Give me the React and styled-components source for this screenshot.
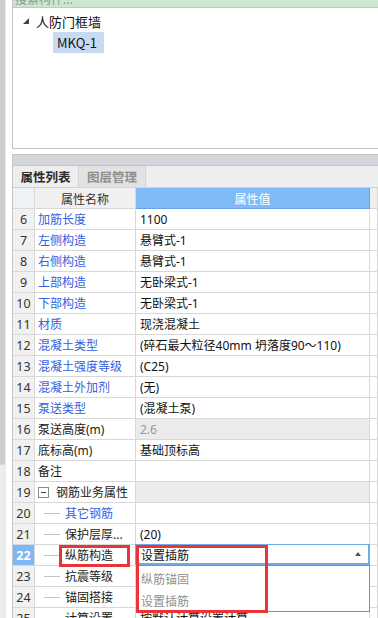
import React from 'react';
import styled, { createGlobalStyle } from 'styled-components';

const GlobalStyle = createGlobalStyle`
  html, body {
    margin: 0;
    padding: 0;
    background: #ffffff;
    overflow: hidden;
  }
  body {
    font-family: "Noto Sans", "Noto Sans CJK SC", sans-serif;
    font-size: 12px;
    color: #1a1a1a;
  }
`;

const Page = styled.div`
  display: flex;
  align-items: flex-start;
  width: 378px;
  height: 618px;
  overflow: hidden;
`;

const ScrollTrack = styled.div`
  width: 6px;
  height: 618px;
  flex-shrink: 0;
  background: #ececec;
`;

const ScrollThumb = styled.div`
  width: 5px;
  height: 465px;
  background: #cdcdcd;
  border-radius: 0 0 2px 2px;
`;

const Gutter = styled.div`
  width: 6px;
  flex-shrink: 0;
`;

const Main = styled.div`
  flex: 1;
  min-width: 0;
`;

const SearchBar = styled.div`
  height: 7px;
  overflow: hidden;
  background: #cbe7cf;
  border-bottom: 1px solid #b8ccbb;
  border-left: 1px solid #c4c4c4;
`;

const SearchHint = styled.div`
  margin-top: -9px;
  padding-left: 2px;
  font-family: "Noto Sans CJK SC", sans-serif;
  font-size: 12px;
  line-height: 16px;
  color: #8c9a8e;
`;

const TreePanel = styled.div`
  height: 141px;
  border-left: 1px solid #c4c4c4;
  border-bottom: 1px solid #c4c4c4;
  padding: 3px 0 0 10px;
  box-sizing: border-box;
  display: flex;
  flex-direction: column;
  gap: 1px;
`;

const TreeRow = styled.div`
  display: flex;
  align-items: center;
  height: 20px;
  padding-left: ${p => p.$indent || 0}px;
`;

const Arrow = styled.svg`
  width: 6px;
  height: 6px;
  margin-right: 7px;
`;

const TreeText = styled.span`
  font-family: "Noto Sans CJK SC", sans-serif;
  font-size: 13px;
  line-height: 21px;
  padding: 0 ${p => (p.$selected ? '7px' : '0')} 0 ${p => (p.$selected ? '4px' : '0')};
  background: ${p => (p.$selected ? '#c8daf2' : 'transparent')};
  color: #111;
`;

const Spacer = styled.div`
  height: 5px;
`;

const Splitter = styled.div`
  height: 10px;
  background: #d4d6db;
  border-top: 1px solid #c3c3c3;
  border-bottom: 1px solid #c3c3c3;
  border-left: 1px solid #c4c4c4;
`;

const TabBar = styled.div`
  height: 21px;
  display: flex;
  background: #eeeeee;
  border-bottom: 1px solid #d2d2d2;
  border-left: 1px solid #c4c4c4;
`;

const Tab = styled.div`
  width: ${p => p.$w}px;
  display: flex;
  align-items: center;
  justify-content: center;
  font-family: "Noto Sans CJK SC", sans-serif;
  font-weight: 700;
  font-size: 12.5px;
  color: ${p => (p.$active ? '#2b2b2b' : '#8e8e8e')};
  background: ${p => (p.$active ? '#eeeeee' : '#e2e2e2')};
  border-right: 1px solid #d6d6d6;
`;

const GridWrap = styled.div`
  position: relative;
  border-left: 1px solid #c4c4c4;
`;

const Grid = styled.div`
  display: grid;
  grid-template-columns: 22px 101px 234px 1fr;
  grid-auto-rows: 21px;
`;

const Cell = styled.div`
  box-sizing: border-box;
  border-right: 1px solid #d8d8d8;
  border-bottom: 1px solid #d8d8d8;
  display: flex;
  align-items: center;
  overflow: hidden;
  white-space: nowrap;
  font-family: "Noto Sans", "Noto Sans CJK SC", sans-serif;
  font-size: 12px;
`;

const HeadCell = styled(Cell)`
  justify-content: center;
  font-family: "Noto Sans CJK SC", sans-serif;
  background: ${p => p.$bg};
  color: ${p => p.$color || '#333'};
  border-color: ${p => p.$line || '#d8d8d8'};
`;

const NumCell = styled(Cell)`
  justify-content: center;
  background: ${p => (p.$active ? '#7db8f5' : '#f1f1f1')};
  color: ${p => (p.$active ? '#ffffff' : '#333')};
  font-weight: ${p => (p.$active ? 700 : 400)};
  font-size: 12.5px;
`;

const NameCell = styled(Cell)`
  padding-left: ${p => p.$pad}px;
  color: ${p => (p.$blue ? '#3460e0' : '#1a1a1a')};
  position: relative;
`;

const ValueCell = styled(Cell)`
  padding-left: 4px;
  background: ${p => (p.$grey ? '#ebebeb' : '#ffffff')};
  color: ${p => (p.$muted ? '#9a9a9a' : '#111')};
`;

const BranchLine = styled.span`
  position: absolute;
  left: 9px;
  top: 10px;
  width: 16px;
  border-top: 1px solid #c4c4c4;
`;

const Toggle = styled.span`
  width: 9px;
  height: 9px;
  border: 1px solid #8a8a8a;
  margin-right: 7px;
  display: flex;
  align-items: center;
  justify-content: center;
  &::after {
    content: '';
    width: 5px;
    border-top: 1px solid #444;
  }
`;

const Editor = styled.div`
  position: absolute;
  left: 122px;
  top: 356px;
  width: 235px;
  height: 21px;
  box-sizing: border-box;
  border: 2px solid #6fa9e6;
  border-left-width: 1px;
  border-top-width: 1px;
  background: #fff;
  display: flex;
  align-items: center;
  justify-content: space-between;
  padding: 0 7px 0 5px;
  font-family: "Noto Sans CJK SC", sans-serif;
  font-size: 12px;
  color: #111;
`;

const UpTri = styled.span`
  width: 0;
  height: 0;
  border-left: 3px solid transparent;
  border-right: 3px solid transparent;
  border-bottom: 4px solid #555;
`;

const DropList = styled.div`
  position: absolute;
  left: 123px;
  top: 377px;
  width: 234px;
  height: 47px;
  box-sizing: border-box;
  border: 1px solid #49a2d8;
  background: #fff;
  display: flex;
  flex-direction: column;
  padding-top: 1px;
`;

const DropItem = styled.div`
  height: 23px;
  display: flex;
  align-items: center;
  padding-left: 4px;
  font-family: "Noto Sans CJK SC", sans-serif;
  font-size: 12px;
  color: #8f8f8f;
`;

const Mark = styled.div`
  position: absolute;
  left: ${p => p.$x}px;
  top: ${p => p.$y}px;
  width: ${p => p.$w}px;
  height: ${p => p.$h}px;
  box-sizing: border-box;
  border: 3px solid #ec3438;
  pointer-events: none;
`;

const rows = [
  { n: 6, name: '加筋长度', blue: true, value: '1100' },
  { n: 7, name: '左侧构造', blue: true, value: '悬臂式-1' },
  { n: 8, name: '右侧构造', blue: true, value: '悬臂式-1' },
  { n: 9, name: '上部构造', blue: true, value: '无卧梁式-1' },
  { n: 10, name: '下部构造', blue: true, value: '无卧梁式-1' },
  { n: 11, name: '材质', blue: true, value: '现浇混凝土' },
  { n: 12, name: '混凝土类型', blue: true, value: '(碎石最大粒径40mm 坍落度90～110)' },
  { n: 13, name: '混凝土强度等级', blue: true, value: '(C25)' },
  { n: 14, name: '混凝土外加剂', blue: true, value: '(无)' },
  { n: 15, name: '泵送类型', blue: true, value: '(混凝土泵)' },
  { n: 16, name: '泵送高度(m)', value: '2.6', grey: true, muted: true },
  { n: 17, name: '底标高(m)', value: '基础顶标高' },
  { n: 18, name: '备注', value: '' },
  { n: 19, name: '钢筋业务属性', value: '', grey: true, group: true },
  { n: 20, name: '其它钢筋', blue: true, value: '', child: true },
  { n: 21, name: '保护层厚...', value: '(20)', child: true },
  { n: 22, name: '纵筋构造', value: '', child: true, active: true },
  { n: 23, name: '抗震等级', value: '', child: true },
  { n: 24, name: '锚固搭接', value: '', child: true },
  { n: 25, name: '计算设置', value: '按默认计算设置计算', child: true },
];

const App = () => {
  return (
    <>
      <GlobalStyle />
      <Page>
        <ScrollTrack>
          <ScrollThumb />
        </ScrollTrack>
        <Gutter />
        <Main>
          <SearchBar>
            <SearchHint>搜索构件...</SearchHint>
          </SearchBar>
          <TreePanel>
            <TreeRow>
              <Arrow viewBox="0 0 6 6">
                <path d="M6 0 L6 6 L0 6 Z" fill="#444" />
              </Arrow>
              <TreeText>人防门框墙</TreeText>
            </TreeRow>
            <TreeRow $indent={30}>
              <TreeText $selected>MKQ-1</TreeText>
            </TreeRow>
          </TreePanel>
          <Spacer />
          <Splitter />
          <TabBar>
            <Tab $w={65} $active>属性列表</Tab>
            <Tab $w={66}>图层管理</Tab>
          </TabBar>
          <GridWrap>
            <Grid>
              <HeadCell $bg="#eef1f5" />
              <HeadCell $bg="#f0f0f0">属性名称</HeadCell>
              <HeadCell $bg="#80bbf8" $color="#ffffff" $line="#65a5ee">属性值</HeadCell>
              <HeadCell $bg="#efefef" />
              {rows.map(r => (
                <React.Fragment key={r.n}>
                  <NumCell $active={r.active}>{r.n}</NumCell>
                  <NameCell $blue={r.blue} $pad={r.child ? 30 : 3}>
                    {r.child && <BranchLine />}
                    {r.group && <Toggle />}
                    {r.name}
                  </NameCell>
                  <ValueCell $grey={r.grey} $muted={r.muted}>{r.value}</ValueCell>
                  <Cell />
                </React.Fragment>
              ))}
            </Grid>
            <Editor>
              <span>设置插筋</span>
              <UpTri />
            </Editor>
            <DropList>
              <DropItem>纵筋锚固</DropItem>
              <DropItem>设置插筋</DropItem>
            </DropList>
            <Mark $x={46} $y={357} $w={71} $h={22} />
            <Mark $x={123} $y={357} $w={132} $h={68} />
          </GridWrap>
        </Main>
      </Page>
    </>
  );
};

export default App;
